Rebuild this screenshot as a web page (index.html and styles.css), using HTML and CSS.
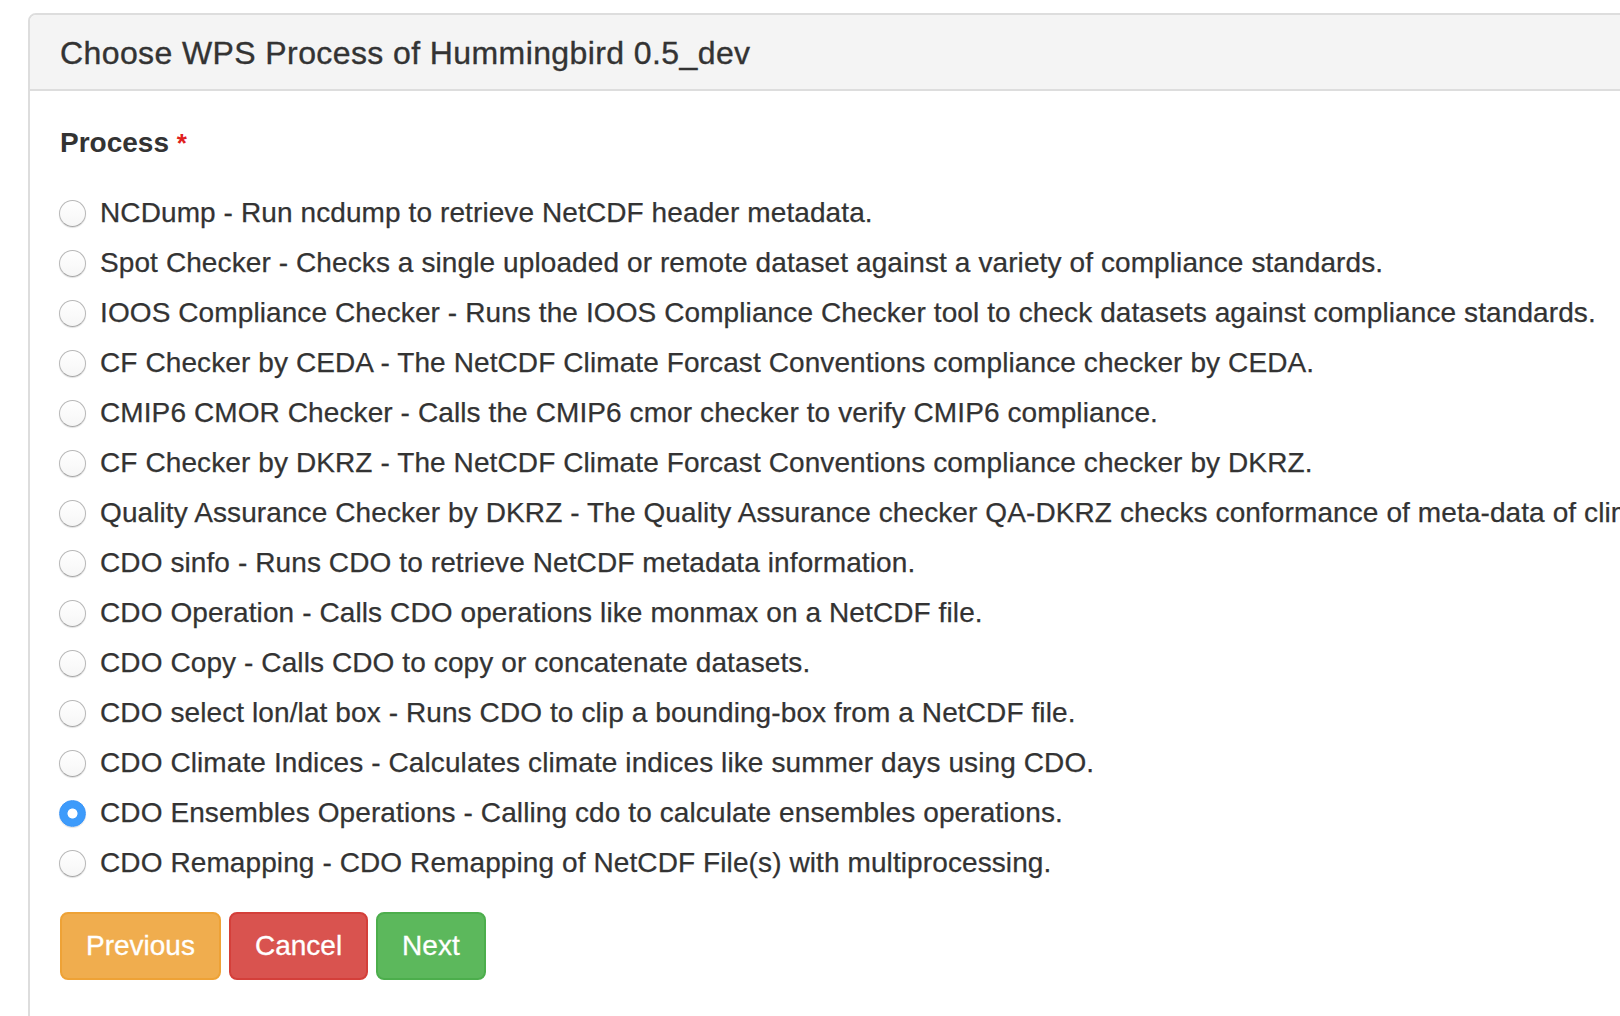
FILE: index.html
```html
<!DOCTYPE html>
<html lang="en">
<head>
<meta charset="utf-8">
<title>Choose WPS Process</title>
<link rel="stylesheet" href="styles.css">
</head>
<body>
<div class="panel">
  <div class="panel-heading">
    <h3 class="panel-title">Choose WPS Process of Hummingbird 0.5_dev</h3>
  </div>
  <div class="panel-body">
    <form class="wizard">
      <div class="form-group">
        <label class="control-label">Process <span class="required">*</span></label>
        <div class="radio-list">
          <label class="radio"><input type="radio" name="process"><span>NCDump - Run ncdump to retrieve NetCDF header metadata.</span></label>
          <label class="radio"><input type="radio" name="process"><span>Spot Checker - Checks a single uploaded or remote dataset against a variety of compliance standards.</span></label>
          <label class="radio"><input type="radio" name="process"><span>IOOS Compliance Checker - Runs the IOOS Compliance Checker tool to check datasets against compliance standards.</span></label>
          <label class="radio"><input type="radio" name="process"><span>CF Checker by CEDA - The NetCDF Climate Forcast Conventions compliance checker by CEDA.</span></label>
          <label class="radio"><input type="radio" name="process"><span>CMIP6 CMOR Checker - Calls the CMIP6 cmor checker to verify CMIP6 compliance.</span></label>
          <label class="radio"><input type="radio" name="process"><span>CF Checker by DKRZ - The NetCDF Climate Forcast Conventions compliance checker by DKRZ.</span></label>
          <label class="radio"><input type="radio" name="process"><span>Quality Assurance Checker by DKRZ - The Quality Assurance checker QA-DKRZ checks conformance of meta-data of climate simulations.</span></label>
          <label class="radio"><input type="radio" name="process"><span>CDO sinfo - Runs CDO to retrieve NetCDF metadata information.</span></label>
          <label class="radio"><input type="radio" name="process"><span>CDO Operation - Calls CDO operations like monmax on a NetCDF file.</span></label>
          <label class="radio"><input type="radio" name="process"><span>CDO Copy - Calls CDO to copy or concatenate datasets.</span></label>
          <label class="radio"><input type="radio" name="process"><span>CDO select lon/lat box - Runs CDO to clip a bounding-box from a NetCDF file.</span></label>
          <label class="radio"><input type="radio" name="process"><span>CDO Climate Indices - Calculates climate indices like summer days using CDO.</span></label>
          <label class="radio"><input type="radio" name="process" checked><span>CDO Ensembles Operations - Calling cdo to calculate ensembles operations.</span></label>
          <label class="radio"><input type="radio" name="process"><span>CDO Remapping - CDO Remapping of NetCDF File(s) with multiprocessing.</span></label>
        </div>
      </div>
      <div class="buttons">
        <button type="button" class="btn btn-warning">Previous</button>
        <button type="button" class="btn btn-danger">Cancel</button>
        <button type="button" class="btn btn-success">Next</button>
      </div>
    </form>
  </div>
</div>
</body>
</html>
```

FILE: styles.css
```css
html, body {
  margin: 0;
  padding: 0;
  overflow: hidden;
  background: #fff;
}

body {
  font-family: "Liberation Sans", Arial, Helvetica, sans-serif;
  font-size: 28px;
  line-height: 40px;
  color: #333;
  -webkit-text-stroke: 0.25px currentColor;
}

.panel {
  margin: 13px 0 0 28px;
  width: 1700px;
  min-height: 1100px;
  border: 2px solid #ddd;
  border-radius: 8px;
  background: #fff;
}

.panel-heading {
  padding: 21px 30px 19px;
  background: #f4f4f4;
  border-bottom: 2px solid #ddd;
  border-radius: 6px 6px 0 0;
}

.panel-title {
  margin: 0;
  font-size: 32px;
  line-height: 34px;
  font-weight: normal;
  letter-spacing: 0.4px;
  color: #333;
  -webkit-text-stroke: 0.35px currentColor;
}

.panel-body {
  padding: 32px 30px 30px;
}

.wizard {
  margin: 0;
}

.form-group {
  margin: 0;
}

.control-label {
  display: block;
  font-weight: bold;
  margin-bottom: 10px;
  -webkit-text-stroke: 0;
}

.required {
  color: #e02020;
  font-size: 26px;
}

.radio-list {
  display: flex;
  flex-direction: column;
  gap: 10px;
  margin: 30px 0 29px;
}

.radio {
  display: flex;
  align-items: center;
  height: 40px;
  white-space: nowrap;
  letter-spacing: 0.1px;
  cursor: pointer;
}

.radio input {
  appearance: none;
  -webkit-appearance: none;
  width: 27px;
  height: 27px;
  margin: 0 14px 0 -1px;
  flex: none;
  border-radius: 50%;
  border: 1.5px solid #b8b8b8;
  border-bottom-color: #a8a8a8;
  background: linear-gradient(#ffffff, #f6f6f6);
  box-shadow: 0 1px 1px rgba(0, 0, 0, 0.12);
  box-sizing: border-box;
}

.radio input:checked {
  border-color: #3a94f6;
  background: radial-gradient(circle, #ffffff 0 4.6px, #3d9bfb 5.4px);
}

.buttons {
  display: flex;
  gap: 8px;
}

.btn {
  font-family: "Liberation Sans", Arial, Helvetica, sans-serif;
  font-size: 28px;
  line-height: 40px;
  padding: 12px 24px;
  border: 2px solid transparent;
  border-radius: 8px;
  color: #fff;
  -webkit-text-stroke: 0.3px #fff;
  cursor: pointer;
}

.btn-warning {
  background: #f0ad4e;
  border-color: #eea236;
}

.btn-danger {
  background: #d9534f;
  border-color: #d43f3a;
}

.btn-success {
  background: #5cb85c;
  border-color: #4cae4c;
}
```
